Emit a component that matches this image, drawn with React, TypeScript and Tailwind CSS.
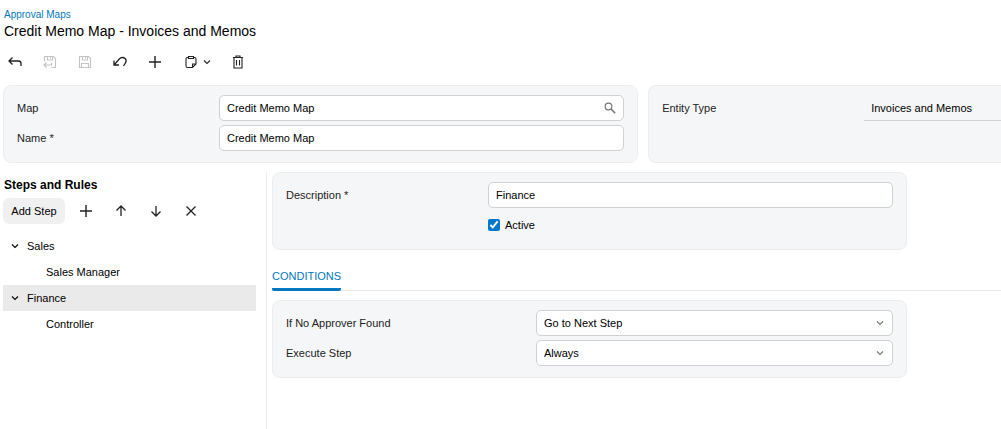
import { ReactNode, useState } from "react";

type IconProps = { children: ReactNode; className?: string };

function Icon({ children, className = "h-4 w-4" }: IconProps) {
    return (
        <svg
            viewBox="0 0 16 16"
            fill="none"
            stroke="currentColor"
            strokeWidth="1.1"
            aria-hidden="true"
            className={className + " shrink-0"}
        >
            {children}
        </svg>
    );
}

const BackIcon = () => (
    <Icon>
        <path strokeWidth="1.3" d="M5.500 3.500 2 7l3.500 3.500M2 7h9.500c1.600 0 2.500 1 2.500 2.500V12" />
    </Icon>
);

const SaveCloseIcon = () => (
    <Icon>
        <path d="M2.500 7.500v-5h9l2 2v9H9.500M5.500 2.500v3.500h5v-3.500M8.500 2.500v2M4.500 8.500 2 11l2.500 2.500M2 11h7.500V8.500" />
    </Icon>
);

const SaveIcon = () => (
    <Icon>
        <path d="M2.500 2.500h9l2 2v9h-11zM5.500 2.500v3.500h5v-3.500M8.500 2.500v2M4.500 13.500v-4h7v4" />
    </Icon>
);

const UndoIcon = () => (
    <Icon>
        <path strokeWidth="1.3" d="M2 6.500V11h5M2.300 10.700 7.300 5c1.700-1.900 4.300-1.900 5.800-.5 1.400 1.500 1.200 3.400 0 5L11.500 12" />
    </Icon>
);

const PlusIcon = () => (
    <Icon>
        <path strokeWidth="1.400" d="M8 2v12M2 8h12" />
    </Icon>
);

const ClipboardIcon = () => (
    <Icon>
        <path d="M5.500 3.500h-1q-1.500 0-1.500 1.500v7q0 1.500 1.500 1.500h5l3.500-3.500V5q0-1.500-1.500-1.500h-1M5.500 2.500h5v2h-5zM9.500 13.500V10H13" />
    </Icon>
);

const TrashIcon = () => (
    <Icon>
        <path d="M3 3.500h10M6 3.500v-1.500h4v1.500M4 3.500v10.500h8v-10.500M6.500 6v5.500M9.500 6v5.500" />
    </Icon>
);

const ArrowUpIcon = () => (
    <Icon>
        <path strokeWidth="1.3" d="M8 13V3M3.500 7.500 8 3l4.500 4.500" />
    </Icon>
);

const ArrowDownIcon = () => (
    <Icon>
        <path strokeWidth="1.3" d="M8 3v10M3.500 8.500 8 13l4.500-4.500" />
    </Icon>
);

const CrossIcon = () => (
    <Icon>
        <path strokeWidth="1.3" d="m3.500 3.500 9 9M12.500 3.500l-9 9" />
    </Icon>
);

const ChevronIcon = ({ className }: { className?: string }) => (
    <Icon className={className}>
        <path strokeWidth="2.200" d="m2 5 6 6 6-6" />
    </Icon>
);

const SearchIcon = () => (
    <Icon className="h-3 w-3">
        <circle cx="6" cy="6" r="4.500" strokeWidth="1.600" />
        <path strokeWidth="2" d="m9.300 9.300 5.500 5.500" />
    </Icon>
);

type ToolButtonProps = { label: string; disabled?: boolean; wide?: boolean; children: ReactNode };

function ToolButton({ label, disabled, wide, children }: ToolButtonProps) {
    return (
        <button
            type="button"
            aria-label={label}
            disabled={disabled}
            className={
                (wide ? "w-[37px] justify-start pl-[5px] gap-1" : "w-6 justify-center") +
                " flex h-6 items-center rounded text-[#222] hover:bg-[#f0f0f0] disabled:text-[#c4c4c4]"
            }
        >
            {children}
        </button>
    );
}

function Card({ children, className = "" }: { children: ReactNode; className?: string }) {
    return (
        <div className={"flex flex-col gap-1 border border-[#ebedef] bg-[#f5f6f8] px-[13px] pt-[9px] pb-[11px] " + className}>
            {children}
        </div>
    );
}

type RowProps = { id: string; label: string; wide?: boolean; children: ReactNode };

function Row({ id, label, wide, children }: RowProps) {
    return (
        <div className="flex h-[26px] items-center">
            <label htmlFor={id} className={(wide ? "w-[250px]" : "w-[202px]") + " shrink-0 text-[#222]"}>
                {label}
            </label>
            <div className="relative h-full min-w-0 flex-1">{children}</div>
        </div>
    );
}

const fieldClass = "h-full w-full rounded-[5px] border border-[#cfd1d4] bg-white px-[7px] text-black outline-none";

type SelectProps = { id: string; options: string[] };

function Select({ id, options }: SelectProps) {
    return (
        <>
            <select id={id} className={fieldClass + " appearance-none"}>
                {options.map((val) => (
                    <option key={val}>{val}</option>
                ))}
            </select>
            <span className="pointer-events-none absolute inset-y-0 right-[9px] flex items-center text-[#777]">
                <ChevronIcon className="h-2 w-2" />
            </span>
        </>
    );
}

const steps = [
    { name: "Sales", rules: ["Sales Manager"] },
    { name: "Finance", rules: ["Controller"] },
];

function StepTree() {
    const [selected, setSelected] = useState("Finance");
    const rowClass = (name: string) =>
        "flex h-[26px] w-full items-center text-left " + (selected === name ? "bg-[#eaeaea]" : "");

    return (
        <ul>
            {steps.map(({ name, rules }) => (
                <li key={name}>
                    <button type="button" onClick={() => setSelected(name)} className={rowClass(name) + " gap-2 pl-2"}>
                        <ChevronIcon className="h-2 w-2" />
                        {name}
                    </button>
                    <ul>
                        {rules.map((rule) => (
                            <li key={rule}>
                                <button
                                    type="button"
                                    onClick={() => setSelected(rule)}
                                    className={rowClass(rule) + " pl-[43px]"}
                                >
                                    {rule}
                                </button>
                            </li>
                        ))}
                    </ul>
                </li>
            ))}
        </ul>
    );
}

export default function App() {
    return (
        <div className="flex min-h-screen flex-col bg-white pl-[3px] font-['Liberation_Sans',Arial,sans-serif] text-[11px] leading-4 text-black">
            <header className="pt-[7px] pl-px">
                <a href="#maps" className="block w-fit text-[10px] leading-4 text-[#0278c0]">
                    Approval Maps
                </a>
                <h1 className="text-[14px] leading-4">Credit Memo Map - Invoices and Memos</h1>
            </header>

            <div className="flex gap-[11px] pt-[11px] pb-[11px]">
                <ToolButton label="Back">
                    <BackIcon />
                </ToolButton>
                <ToolButton label="Save and close" disabled>
                    <SaveCloseIcon />
                </ToolButton>
                <ToolButton label="Save" disabled>
                    <SaveIcon />
                </ToolButton>
                <ToolButton label="Undo">
                    <UndoIcon />
                </ToolButton>
                <ToolButton label="Add">
                    <PlusIcon />
                </ToolButton>
                <ToolButton label="Clipboard" wide>
                    <ClipboardIcon />
                    <ChevronIcon className="h-2 w-2" />
                </ToolButton>
                <ToolButton label="Delete">
                    <TrashIcon />
                </ToolButton>
            </div>

            <div className="grid grid-cols-[9fr_5fr] gap-[10px]">
                <Card className="rounded-[8px]">
                    <Row id="map" label="Map">
                        <input id="map" defaultValue="Credit Memo Map" className={fieldClass} />
                        <button
                            type="button"
                            aria-label="Search"
                            className="absolute inset-y-0 right-[8px] flex items-center text-[#777]"
                        >
                            <SearchIcon />
                        </button>
                    </Row>
                    <Row id="name" label="Name *">
                        <input id="name" defaultValue="Credit Memo Map" className={fieldClass} />
                    </Row>
                </Card>
                <Card className="rounded-l-[8px] border-r-0 pr-0">
                    <Row id="entity" label="Entity Type">
                        <input
                            id="entity"
                            readOnly
                            defaultValue="Invoices and Memos"
                            className="h-full w-full border-b border-[#cfd1d4] px-[7px] outline-none"
                        />
                    </Row>
                </Card>
            </div>

            <main className="flex flex-1 pt-[9px]">
                <section className="w-[263px] shrink-0 pr-[10px]">
                    <h2 className="pt-[5px] pl-px text-[12px] leading-4 font-bold">Steps and Rules</h2>
                    <div className="flex items-center gap-[9px] pt-[5px] pb-[9px]">
                        <button type="button" className="h-[26px] w-[62px] rounded-[6px] bg-[#f0f0f0]">
                            Add Step
                        </button>
                        <div className="flex gap-[11px]">
                            <ToolButton label="Add rule">
                                <PlusIcon />
                            </ToolButton>
                            <ToolButton label="Move up">
                                <ArrowUpIcon />
                            </ToolButton>
                            <ToolButton label="Move down">
                                <ArrowDownIcon />
                            </ToolButton>
                            <ToolButton label="Delete step">
                                <CrossIcon />
                            </ToolButton>
                        </div>
                    </div>
                    <StepTree />
                </section>

                <section className="min-w-0 flex-1 border-l border-[#ebedef] pl-[5px]">
                    <Card className="w-full max-w-[635px] rounded-[8px]">
                        <Row id="description" label="Description *">
                            <input id="description" defaultValue="Finance" className={fieldClass} />
                        </Row>
                        <div className="flex h-[26px] items-center pl-[202px]">
                            <label className="flex items-center gap-[5px]">
                                <input type="checkbox" defaultChecked className="h-3 w-3 accent-[#0278c8]" />
                                Active
                            </label>
                        </div>
                    </Card>

                    <div role="tablist" className="flex border-b border-[#e4e6e8] pt-[18px]">
                        <button
                            type="button"
                            role="tab"
                            aria-selected="true"
                            className="-mb-px rounded-b-xs border-b-3 border-[#0278c0] pb-1 text-[#0278c0]"
                        >
                            CONDITIONS
                        </button>
                    </div>

                    <Card className="mt-[9px] w-full max-w-[635px] rounded-[8px]">
                        <Row id="no-approver" label="If No Approver Found" wide>
                            <Select id="no-approver" options={["Go to Next Step", "Approve", "Reject"]} />
                        </Row>
                        <Row id="execute" label="Execute Step" wide>
                            <Select id="execute" options={["Always", "If Previous Step Approved"]} />
                        </Row>
                    </Card>
                </section>
            </main>
        </div>
    );
}
